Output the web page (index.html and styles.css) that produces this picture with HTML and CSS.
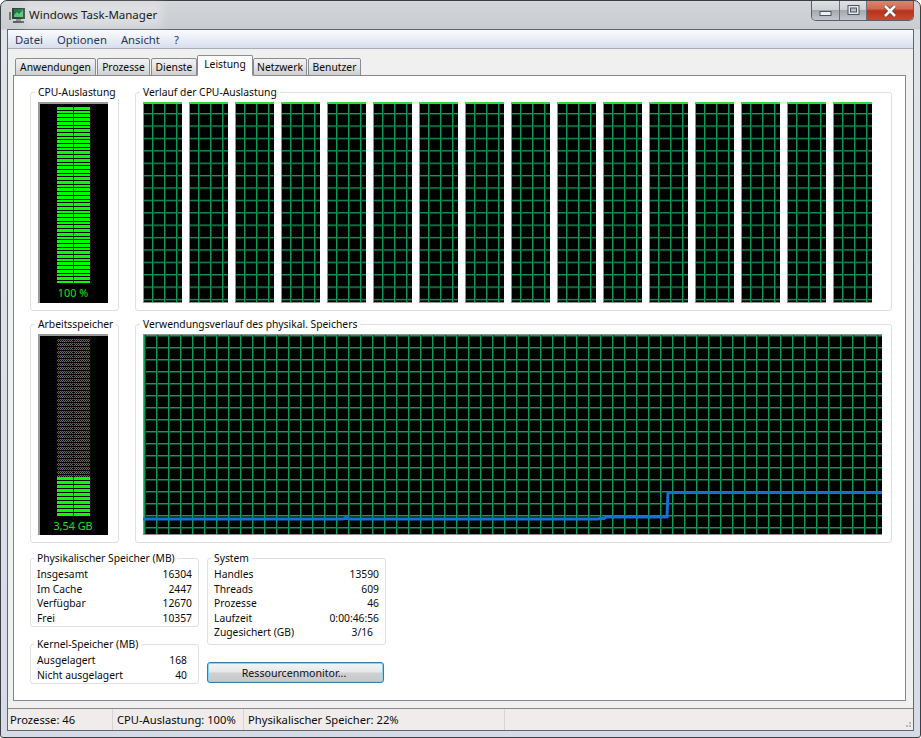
FILE: index.html
```html
<!DOCTYPE html>
<html lang="de">
<head>
<meta charset="UTF-8">
<title>Windows Task-Manager</title>
<link rel="stylesheet" href="styles.css">
</head>
<body>
<div class="window">
  <div class="titlebar">
    <svg class="appicon" width="18" height="18" viewBox="0 0 18 18">
      <rect x="1" y="5" width="2" height="8" fill="#6d7f78"/>
      <rect x="4" y="1" width="13" height="11" fill="#33403c"/>
      <rect x="6" y="2" width="9" height="8" fill="#1d7a44"/>
      <path d="M6 8l3-3 2 2 4-4v7H6z" fill="#59c46f"/>
      <rect x="8" y="12" width="5" height="2" fill="#8b9492"/>
      <rect x="5" y="14" width="11" height="2" fill="#59625f"/>
    </svg>
    <span class="wintitle">Windows Task-Manager</span>
    <div class="caption">
      <div class="capbtn capmin"><svg width="13" height="7" viewBox="0 0 13 7"><rect x="1" y="1.5" width="11" height="4" fill="#eef1f4" stroke="#4d5560"/></svg></div>
      <div class="capbtn capmax"><svg width="13" height="10" viewBox="0 0 13 10"><rect x="1" y="0.5" width="11" height="9" fill="#e6eaee" stroke="#4d5560"/><rect x="3.5" y="3" width="6" height="4" fill="#b9c0c6" stroke="#4d5560"/></svg></div>
      <div class="capbtn capclose"><svg width="14" height="12" viewBox="0 0 14 12"><path d="M2 1l10 10M12 1L2 11" stroke="#5b3a34" stroke-width="4"/><path d="M2 1l10 10M12 1L2 11" stroke="#fff" stroke-width="2.6"/></svg></div>
    </div>
  </div>

  <div class="client">
    <div class="menubar">
      <span>Datei</span>
      <span>Optionen</span>
      <span>Ansicht</span>
      <span>?</span>
    </div>

    <div class="tabs">
      <div class="tab t1">Anwendungen</div>
      <div class="tab t2">Prozesse</div>
      <div class="tab t3">Dienste</div>
      <div class="tab t4 active">Leistung</div>
      <div class="tab t5">Netzwerk</div>
      <div class="tab t6">Benutzer</div>
    </div>

    <div class="panel">
      <div class="perfgrid">
        <fieldset class="group">
          <legend>CPU-Auslastung</legend>
          <div class="meter">
            <div class="bars cpubars"></div>
            <div class="metertext">100 %</div>
          </div>
        </fieldset>
        <fieldset class="group">
          <legend>Verlauf der CPU-Auslastung</legend>
          <div class="cpugraphs">
            <div class="graph cpugraph"></div>
            <div class="graph cpugraph"></div>
            <div class="graph cpugraph"></div>
            <div class="graph cpugraph"></div>
            <div class="graph cpugraph"></div>
            <div class="graph cpugraph"></div>
            <div class="graph cpugraph"></div>
            <div class="graph cpugraph"></div>
            <div class="graph cpugraph"></div>
            <div class="graph cpugraph"></div>
            <div class="graph cpugraph"></div>
            <div class="graph cpugraph"></div>
            <div class="graph cpugraph"></div>
            <div class="graph cpugraph"></div>
            <div class="graph cpugraph"></div>
            <div class="graph cpugraph"></div>
          </div>
        </fieldset>
        <fieldset class="group">
          <legend>Arbeitsspeicher</legend>
          <div class="meter">
            <div class="bars membars-dim"></div>
            <div class="bars membars"></div>
            <div class="metertext">3,54 GB</div>
          </div>
        </fieldset>
        <fieldset class="group">
          <legend>Verwendungsverlauf des physikal. Speichers</legend>
          <div class="graph memgraph">
            <svg class="memline" width="739" height="201" viewBox="0 0 739 201">
              <path d="M0 185H200L203 183.500L206 185H455L457 184.500H461L463 183H524L525 158.500H739" fill="none" stroke="#1470d8" stroke-width="3"/>
            </svg>
          </div>
        </fieldset>
      </div>

      <div class="lower">
        <div class="lowercol leftcol">
          <fieldset class="group">
            <legend>Physikalischer Speicher (MB)</legend>
            <div class="row"><span>Insgesamt</span><span>16304</span></div>
            <div class="row"><span>Im Cache</span><span>2447</span></div>
            <div class="row"><span>Verfügbar</span><span>12670</span></div>
            <div class="row"><span>Frei</span><span>10357</span></div>
          </fieldset>
          <fieldset class="group kernel">
            <legend>Kernel-Speicher (MB)</legend>
            <div class="row"><span>Ausgelagert</span><span>168</span></div>
            <div class="row"><span>Nicht ausgelagert</span><span>40</span></div>
          </fieldset>
        </div>
        <div class="lowercol rightcol">
          <fieldset class="group">
            <legend>System</legend>
            <div class="row"><span>Handles</span><span>13590</span></div>
            <div class="row"><span>Threads</span><span>609</span></div>
            <div class="row"><span>Prozesse</span><span>46</span></div>
            <div class="row"><span>Laufzeit</span><span>0:00:46:56</span></div>
            <div class="row commit"><span>Zugesichert (GB)</span><span>3/16</span></div>
          </fieldset>
          <button class="resbtn" type="button">Ressourcenmonitor...</button>
        </div>
      </div>
    </div>

    <div class="statusbar">
      <div class="cell c1">Prozesse: 46</div>
      <div class="cell c2">CPU-Auslastung: 100%</div>
      <div class="cell c3">Physikalischer Speicher: 22%</div>
      <div class="cell c4"></div>
      <svg class="grip" width="8" height="8" viewBox="0 0 8 8">
        <path d="M5 1h2v2H5zM2 4h2v2H2zM5 4h2v2H5z" fill="#b9b9b9"/>
      </svg>
    </div>
  </div>
</div>
</body>
</html>
```

FILE: styles.css
```css
html, body {
  margin: 0;
  height: 100%;
  background: #fff;
  font-family: "Noto Sans", Arial, sans-serif;
  font-size: 10.300px;
  color: #0a0a0a;
  overflow: hidden;
}
.window {
  box-sizing: border-box;
  width: 921px;
  height: 738px;
  padding: 0 6px 6px 6px;
  border: 1px solid #3c4046;
  border-radius: 7px 7px 3px 3px;
  background: linear-gradient(to bottom, #d4d6d9 0, #c9ccd0 28px, #dfe4ea 29px, #d5dce8 100%);
}

/* title bar */
.titlebar {
  display: flex;
  height: 28px;
  align-items: flex-start;
  position: relative;
}
.appicon {
  margin: 6px 0 0 1px;
}
.wintitle {
  margin: 6px 0 0 3px;
  font-size: 11.500px;
  line-height: 16px;
  background: rgba(255, 255, 255, 0.28);
  box-shadow: 0 0 8px 5px rgba(255, 255, 255, 0.28);
  color: #1a1a1a;
}
.caption {
  display: flex;
  margin-left: auto;
  margin-right: 0;
  height: 19px;
  border: 1px solid #5a5f66;
  border-top: 0;
  border-radius: 0 0 5px 5px;
  overflow: hidden;
}
.capbtn {
  display: flex;
  align-items: center;
  justify-content: center;
  height: 19px;
}
.capmin, .capmax {
  background: linear-gradient(to bottom, #dfe1e3 0, #cfd2d5 45%, #a5a9ae 50%, #c2c5c9 100%);
  border-right: 1px solid #6c7077;
}
.capmin { width: 27px; }
.capmin svg { margin-top: 5px; }
.capmax { width: 26px; }
.capmax svg { margin-top: -2px; }
.capclose {
  width: 46px;
  background: linear-gradient(to bottom, #d98672 0, #cf6a50 40%, #b8321c 52%, #c84a2e 100%);
}

/* client area */
.client {
  box-sizing: border-box;
  height: 702px;
  border: 1px solid #62666d;
  background: #f0f0f0;
}
.menubar {
  box-sizing: border-box;
  display: flex;
  height: 19px;
  padding-left: 7px;
  gap: 14px;
  line-height: 20px;
  font-size: 11.300px;
  color: #1e395b;
  border-bottom: 1px solid #a9adb5;
  background: linear-gradient(to bottom, #fbfcfe 0, #e9edf5 50%, #d8deec 100%);
}
.tabs {
  display: flex;
  align-items: flex-end;
  height: 26px;
  padding-left: 7px;
  position: relative;
  z-index: 1;
}
.tab {
  box-sizing: border-box;
  height: 18px;
  margin-right: 1px;
  margin-bottom: -1px;
  text-align: center;
  line-height: 16px;
  border: 1px solid #898c95;
  border-bottom: 1px solid #898c95;
  border-radius: 2px 2px 0 0;
  background: linear-gradient(to bottom, #f2f2f2 0, #e4e4e4 50%, #cfcfcf 100%);
}
.tab.active {
  height: 21px;
  margin-left: -1px;
  margin-right: 0;
  background: #fff;
  border-bottom-color: #fff;
}
.t1 { width: 81px; }
.t2 { width: 53px; }
.t3 { width: 46px; }
.t4 { width: 56px; }
.t5 { width: 54px; }
.t6 { width: 53px; }

.panel {
  box-sizing: border-box;
  width: 893px;
  height: 626px;
  margin-left: 5px;
  padding: 9px 0 0 16px;
  border: 1px solid #85888f;
  background: #fff;
}

/* group boxes */
.group {
  box-sizing: border-box;
  min-width: 0;
  margin: 0;
  padding: 3px 8px 7px 7px;
  border: 1px solid #dcdfe3;
  border-radius: 3px;
}
.group legend {
  padding: 0 3px;
  margin-left: -3px;
  line-height: 14px;
  white-space: nowrap;
}
.perfgrid {
  display: grid;
  grid-template-columns: 89px 757px;
  grid-template-rows: 226px 226px;
  column-gap: 16px;
  row-gap: 6px;
}

/* meters */
.meter {
  box-sizing: border-box;
  display: flex;
  flex-direction: column;
  align-items: center;
  width: 70px;
  height: 201px;
  padding-top: 3px;
  background: #000;
  border-top: 2px solid #9a9a9a;
  border-left: 2px solid #9a9a9a;
}
.bars {
  width: 33px;
  flex: none;
  margin-left: -2px;
}
.cpubars {
  height: 176px;
  background:
    linear-gradient(to right, transparent 16px, #000 16px, #000 17px, transparent 17px),
    repeating-linear-gradient(to bottom, #0f0 0, #0f0 2.700px, #000 2.700px, #000 3.700px);
}
.membars-dim {
  height: 138px;
  background:
    linear-gradient(to right, transparent 16px, #000 16px, #000 17px, transparent 17px),
    repeating-linear-gradient(to bottom, transparent 0, transparent 3px, #000 3px, #000 4px),
    repeating-conic-gradient(#12a012 0 25%, #000 0 50%) 0 0 / 2px 2px;
}
.membars {
  height: 39px;
  background:
    linear-gradient(to right, transparent 16px, #000 16px, #000 17px, transparent 17px),
    repeating-linear-gradient(to bottom, #0f0 0, #0f0 3px, #000 3px, #000 4px);
}
.metertext {
  margin-top: 3px;
  line-height: 14px;
  font-size: 10.800px;
  color: #1fe01f;
  margin-left: -2px;
}

/* history graphs */
.graph {
  box-sizing: border-box;
  height: 201px;
  background-color: #000;
  border-left: 1px solid #8f8f8f;
  border-bottom: 1px solid #8f8f8f;
  background-image:
    linear-gradient(to right, #12995a 1px, #07472a 1px, #07472a 2px, transparent 2px),
    linear-gradient(to bottom, #12995a 1px, #07472a 1px, #07472a 2px, transparent 2px);
}
.cpugraphs {
  display: flex;
  gap: 7px;
}
.cpugraph {
  width: 39px;
  border-top: 2px solid #2fdc3a;
  background-size: 12px 100%, 100% 12.400px;
  background-position: 8px 0, 0 9px;
}
.memgraph {
  position: relative;
  width: 739px;
  border-top: 1px solid #8f8f8f;
  background-size: 12px 100%, 100% 12px;
}
.memline {
  position: absolute;
  left: -1px;
  top: -1px;
}

/* lower stats */
.lower {
  display: flex;
  gap: 8px;
  margin-top: 8px;
}
.lowercol {
  display: flex;
  flex-direction: column;
}
.leftcol { width: 169px; }
.rightcol { width: 179px; }
.lower .group {
  padding: 2px 6px 0 6px;
  height: 76px;
}
.lower .kernel {
  height: 47px;
  margin-top: 10px;
}
.kernel .row { padding-right: 5px; }
.rightcol .group { height: 94px; }
.row {
  display: flex;
  justify-content: space-between;
  line-height: 14.500px;
  white-space: nowrap;
}
.commit span:last-child { padding-right: 6px; }
.resbtn {
  box-sizing: border-box;
  width: 177px;
  height: 21px;
  margin-top: 17px;
  padding: 0 3px 0 0;
  font: inherit;
  font-size: 10.600px;
  color: #111;
  border: 1px solid #2f7ea8;
  border-radius: 3px;
  box-shadow: inset 0 0 0 1px #7fd6f5;
  background: linear-gradient(to bottom, #f3f4f5 0, #e6e7e8 48%, #cfd0d1 52%, #c8c9cb 100%);
}

/* status bar */
.statusbar {
  box-sizing: border-box;
  display: flex;
  position: relative;
  height: 22px;
  margin-top: 7px;
  font-size: 11.200px;
  line-height: 21px;
  border-top: 1px solid #8a8a8a;
  background: #f0ecec;
}
.cell {
  box-sizing: border-box;
  padding-left: 4px;
  border-right: 1px solid #d6d6d4;
  white-space: nowrap;
}
.c1 { width: 105px; padding-left: 2px; }
.c2 { width: 131px; }
.c3 { width: 261px; }
.c4 { flex: 1; border-right: 0; }
.grip {
  position: absolute;
  right: 1px;
  bottom: 1px;
}
```
